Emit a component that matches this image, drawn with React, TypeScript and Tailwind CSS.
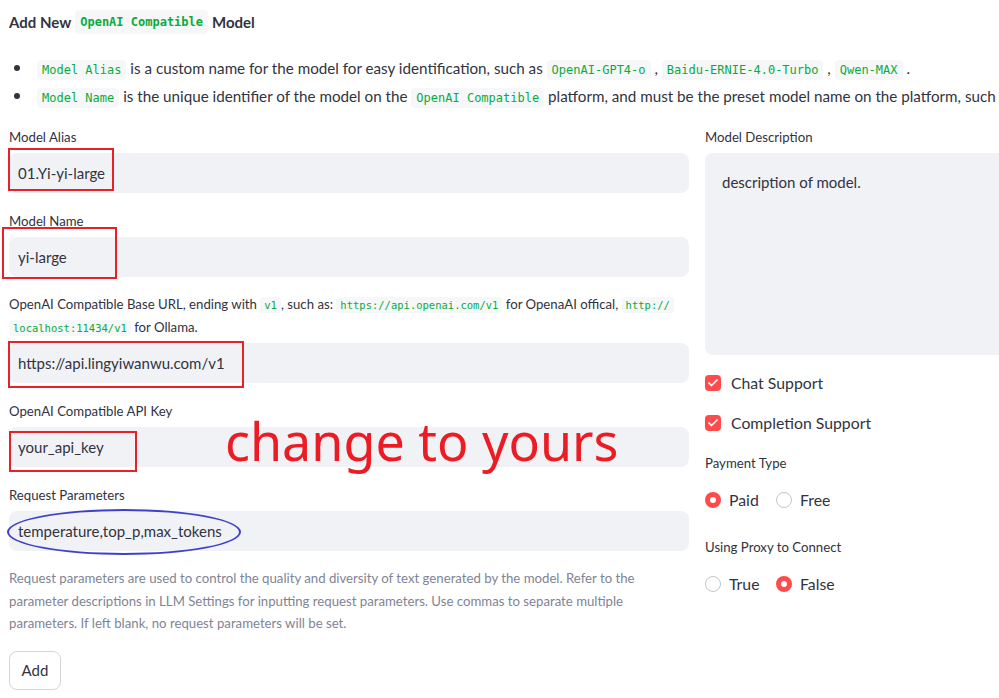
import { Check } from "lucide-react";
import type { ReactNode } from "react";

const body = { fontFamily: "Lato, 'Noto Sans', sans-serif" };

function Code({ children, small }: { children: ReactNode; small?: boolean }) {
  return (
    <code
      className={
        small
          ? "rounded-[4px] bg-[#f6f7f9] px-[4px] py-[2px] text-[10.5px] text-[#09ab3b]"
          : "rounded-[4px] bg-[#f6f7f9] px-[5px] py-[3px] text-[12px] text-[#09ab3b]"
      }
      style={{ fontFamily: "'DejaVu Sans Mono', 'Liberation Mono', monospace" }}
    >
      {children}
    </code>
  );
}

function Label({ children }: { children: ReactNode }) {
  return <div className="mb-[6px] h-[20px] text-[13.2px] leading-[20px] text-[#31333f]">{children}</div>;
}

function Input({ value }: { value: string }) {
  return (
    <div className="flex h-[40px] items-center rounded-[8px] bg-[#f0f2f6] pl-[9px] text-[15px] text-[#31333f]">
      {value}
    </div>
  );
}

function Checkbox({ label }: { label: string }) {
  return (
    <div className="flex h-[24px] items-center gap-[10px]">
      <span className="flex h-[16px] w-[16px] items-center justify-center rounded-[4px] bg-[#ff4b4b]">
        <Check size={12} strokeWidth={3.5} color="white" />
      </span>
      <span className="text-[15.8px] text-[#31333f]">{label}</span>
    </div>
  );
}

function Radio({ label, on }: { label: string; on?: boolean }) {
  return (
    <div className="flex h-[24px] w-[71px] items-center gap-[8px]">
      {on ? (
        <span className="flex h-[16px] w-[16px] items-center justify-center rounded-full bg-[#ff4b4b]">
          <span className="h-[6px] w-[6px] rounded-full bg-white" />
        </span>
      ) : (
        <span className="h-[16px] w-[16px] rounded-full border border-[#c4c6cc] bg-white" />
      )}
      <span className="text-[15.8px] text-[#31333f]">{label}</span>
    </div>
  );
}

export default function App() {
  return (
    <div className="relative h-[698px] w-[999px] overflow-hidden bg-white" style={body}>
      <div className="w-[1060px] px-[9px] pt-[10px]">
        <h2 className="flex h-[24px] items-center gap-[4px] text-[15px] font-bold text-[#31333f]">
          Add New <Code>OpenAI Compatible</Code> Model
        </h2>

        <ul className="mt-[20px] text-[15.2px] text-[#31333f]">
          <li className="flex h-[28px] items-center whitespace-nowrap">
            <span className="ml-[5px] mr-[17px] h-[6px] w-[6px] shrink-0 rounded-full bg-[#31333f]" />
            <span>
              <Code>Model Alias</Code> is a custom name for the model for easy identification, such as{" "}
              <Code>OpenAI-GPT4-o</Code> , <Code>Baidu-ERNIE-4.0-Turbo</Code> , <Code>Qwen-MAX</Code> .
            </span>
          </li>
          <li className="flex h-[28px] items-center whitespace-nowrap">
            <span className="ml-[5px] mr-[17px] h-[6px] w-[6px] shrink-0 rounded-full bg-[#31333f]" />
            <span>
              <Code>Model Name</Code> is the unique identifier of the model on the <Code>OpenAI Compatible</Code>{" "}
              platform, and must be the preset model name on the platform, such as
            </span>
          </li>
        </ul>

        <div className="mt-[17px] flex gap-[16px]">
          <div className="w-[680px]">
            <Label>Model Alias</Label>
            <Input value="01.Yi-yi-large" />

            <div className="mt-[18px]">
              <Label>Model Name</Label>
              <Input value="yi-large" />
            </div>

            <div className="mt-[16px] mb-[4px] text-[13.2px] leading-[22px] text-[#31333f]">
              <div className="whitespace-nowrap">
                OpenAI Compatible Base URL, ending with <Code small>v1</Code>, such as:{" "}
                <Code small>https://api.openai.com/v1</Code> for OpenaAI offical, <Code small>http://</Code>
              </div>
              <div className="whitespace-nowrap">
                <Code small>localhost:11434/v1</Code> for Ollama.
              </div>
            </div>
            <Input value="https://api.lingyiwanwu.com/v1" />

            <div className="mt-[18px]">
              <Label>OpenAI Compatible API Key</Label>
              <Input value="your_api_key" />
            </div>

            <div className="mt-[18px]">
              <Label>Request Parameters</Label>
              <Input value="temperature,top_p,max_tokens" />
            </div>

            <div className="mt-[16px] text-[13.2px] leading-[22.5px] text-[#808495]">
              <div className="whitespace-nowrap">
                Request parameters are used to control the quality and diversity of text generated by the model. Refer to the
              </div>
              <div className="whitespace-nowrap">
                parameter descriptions in LLM Settings for inputting request parameters. Use commas to separate multiple
              </div>
              <div className="whitespace-nowrap">parameters. If left blank, no request parameters will be set.</div>
            </div>

            <button className="mt-[16px] h-[39px] w-[52px] rounded-[8px] border border-[#d6d6d9] bg-white text-[15px] text-[#31333f]">
              Add
            </button>
          </div>

          <div className="w-[340px]">
            <Label>Model Description</Label>
            <div className="h-[202px] rounded-[8px] bg-[#f0f2f6] pl-[17px] pt-[17px] text-[15px] leading-[24px] text-[#31333f]">
              description of model.
            </div>

            <div className="mt-[16px] flex flex-col gap-[16px]">
              <Checkbox label="Chat Support" />
              <Checkbox label="Completion Support" />
            </div>

            <div className="mt-[18px]">
              <div className="h-[20px] text-[13.2px] leading-[20px] text-[#31333f]">Payment Type</div>
              <div className="mt-[15px] flex">
                <Radio label="Paid" on />
                <Radio label="Free" />
              </div>
            </div>

            <div className="mt-[25px]">
              <div className="h-[20px] text-[13.2px] leading-[20px] text-[#31333f]">Using Proxy to Connect</div>
              <div className="mt-[15px] flex">
                <Radio label="True" />
                <Radio label="False" on />
              </div>
            </div>
          </div>
        </div>
      </div>

      {/* annotations drawn on top of the screenshot */}
      <div className="absolute left-[8px] top-[148px] h-[43px] w-[106px] border-2 border-[#e8202a]" />
      <div className="absolute left-[2px] top-[227px] h-[52px] w-[115px] border-2 border-[#e8202a]" />
      <div className="absolute left-[8px] top-[341px] h-[47px] w-[236px] border-2 border-[#e8202a]" />
      <div className="absolute left-[9px] top-[431px] h-[41px] w-[128px] border-2 border-[#e8202a]" />
      <div className="absolute left-[7px] top-[509px] h-[46px] w-[234px] rounded-[50%] border-2 border-[#3f42c9]" />
      <div
        className="absolute left-[225px] top-[406px] whitespace-nowrap text-[52px] leading-[70px] text-[#ec1c24]"
        style={{ fontFamily: "'Noto Sans', sans-serif" }}
      >
        change to yours
      </div>
    </div>
  );
}
